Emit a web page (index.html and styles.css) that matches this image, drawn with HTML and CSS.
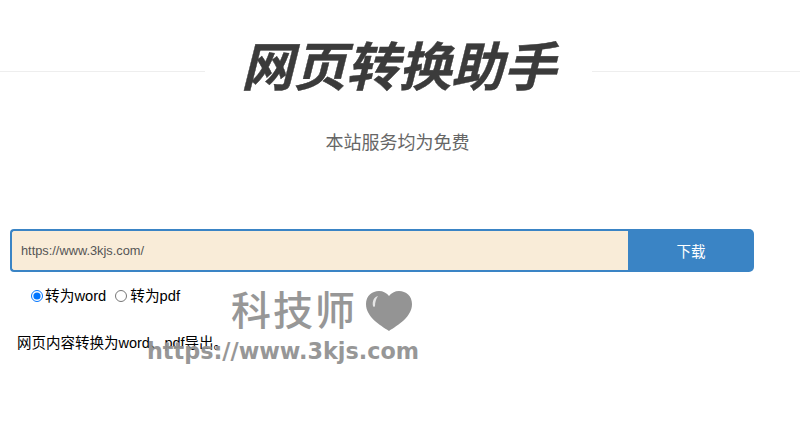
FILE: index.html
```html
<!DOCTYPE html>
<html lang="zh-CN">
<head>
  <meta charset="UTF-8" />
  <meta name="viewport" content="width=device-width, initial-scale=1.0"/>
  <title>网页转换助手</title>
  <link rel="stylesheet" href="styles.css">
</head>
<body>

  <div class="title-row">
    <div class="rule rule-left"></div>
    <h1 class="title">网页转换助手</h1>
    <div class="rule"></div>
  </div>
  <p class="subtitle">本站服务均为免费</p>

  <div class="url-form">
    <input type="text" class="url-input" value="https://www.3kjs.com/">
    <button class="download-btn">下载</button>
  </div>

  <div class="format-row">
    <label class="format"><input type="radio" name="format" checked>转为word</label>
    <label class="format"><input type="radio" name="format">转为pdf</label>
  </div>

  <p class="desc">网页内容转换为word、pdf导出。</p>

  <div class="watermark">
    <div class="wm-top">
      <span class="wm-name">科技师</span>
      <svg class="wm-heart" viewBox="0 0 46 40" width="46" height="40">
        <path d="M23 40C14 34 0 26 0 13C0 5 6 0 13 0C17 0 21 2 23 5C25 2 29 0 33 0C40 0 46 5 46 13C46 26 32 34 23 40Z" fill="#8f8f8f"/>
        <path d="M7 15C6 10 8 6 12 5C10 8 9 11 9 15C9 16 7 16 7 15Z" fill="#e4e4e4"/>
      </svg>
    </div>
    <div class="wm-url">https://www.3kjs.com</div>
  </div>

</body>
</html>
```

FILE: styles.css
```css
html, body {
  height: 100%;
  overflow: hidden;
}

body {
  font-family: "Liberation Sans", "Noto Sans CJK SC", sans-serif;
  background-color: #fff;
  margin: 0;
  position: relative;
}

.title-row {
  display: flex;
  align-items: center;
  height: 60px;
  margin-top: 41px;
}

.rule {
  flex: 1;
  height: 1px;
  background-color: #eee;
}

.rule-left {
  flex: none;
  width: 205px;
}

.title {
  width: 387px;
  margin: 0;
  padding-bottom: 6px;
  text-align: center;
  font-size: 52.5px;
  line-height: 54px;
  font-style: italic;
  font-weight: 700;
  color: #3b3b3b;
  -webkit-text-stroke: 0.4px #3b3b3b;
}

.subtitle {
  margin: 28px 0 0;
  padding-right: 5px;
  text-align: center;
  font-size: 18px;
  line-height: 28px;
  color: #666;
}

.url-form {
  display: flex;
  width: 744px;
  height: 43px;
  margin: 72px 0 0 10px;
}

.url-input {
  flex: 1;
  min-width: 0;
  box-sizing: border-box;
  padding: 0 9px;
  font-family: inherit;
  font-size: 12.8px;
  color: #555;
  background-color: #f9ecd8;
  border: 2px solid #3a84c5;
  border-right: none;
  border-radius: 4px 0 0 4px;
  outline: none;
}

.download-btn {
  width: 126px;
  border: none;
  border-radius: 0 5px 5px 0;
  background-color: #3a84c5;
  color: #fff;
  font-family: inherit;
  font-size: 14.5px;
}

.format-row {
  display: flex;
  gap: 9px;
  margin: 14px 0 0 31px;
  font-size: 14.7px;
  line-height: 20px;
  color: #000;
}

.format {
  display: flex;
  align-items: center;
}

.format input {
  width: 12px;
  height: 12px;
  margin: 0 2px 0 0;
}

.format + .format input {
  margin-right: 3px;
}

.desc {
  margin: 27px 0 0 17px;
  font-size: 14.5px;
  line-height: 20px;
  color: #000;
}

.watermark {
  position: absolute;
  left: 147px;
  top: 288px;
  width: 272px;
  color: #929292;
  opacity: 0.95;
}

.wm-top {
  display: flex;
  align-items: center;
  height: 46px;
  padding-left: 84px;
}

.wm-name {
  font-size: 40px;
  line-height: 46px;
  letter-spacing: 2px;
  font-weight: 500;
}

.wm-heart {
  margin-left: 9px;
}

.wm-url {
  margin-top: 4px;
  font-family: "DejaVu Sans", sans-serif;
  font-size: 22.3px;
  line-height: 26px;
  font-weight: 700;
  white-space: nowrap;
}
```
